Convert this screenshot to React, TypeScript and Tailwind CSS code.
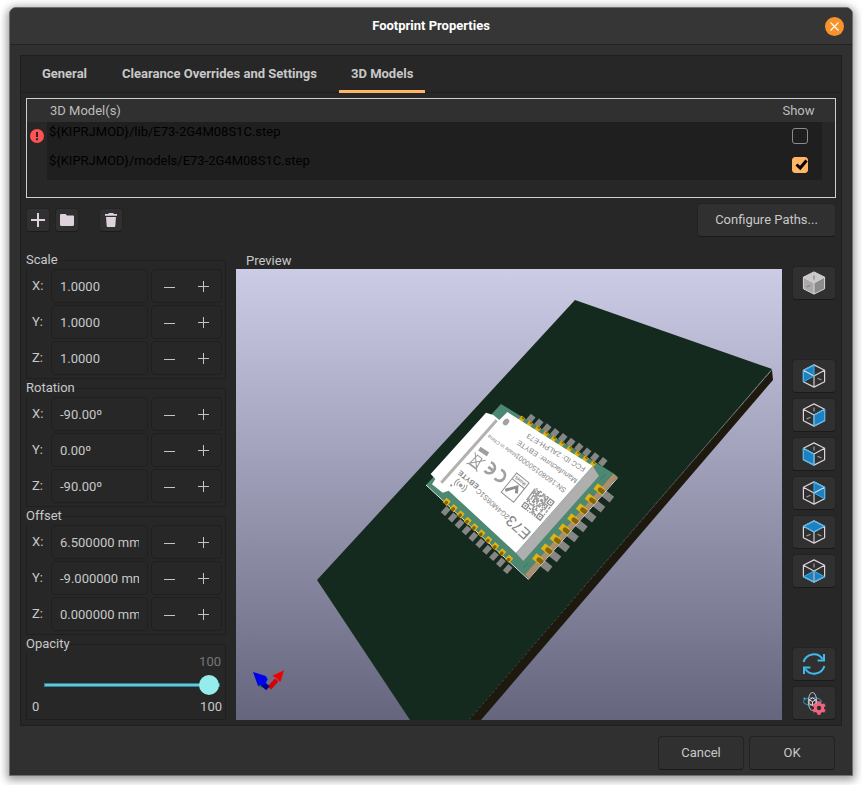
import type { ReactNode } from "react";
import { useState } from "react";

const BTN =
  "flex items-center justify-center rounded-[4px] border border-[#232323] border-b-[#1a1a1a] bg-[#303030] hover:bg-[#383838]";

const TOP = "12,0.9 22.6,6.2 12,12 1.4,6.2";
const FACES = {
  left: "12,0.9 1.4,6.2 1.4,17.8 12,12",
  right: "12,12 22.6,6.2 22.6,17.8 12,23.1",
  front: "12,12 1.4,6.2 1.4,17.8 12,23.1",
  back: "12,0.9 22.6,6.2 22.6,17.8 12,12",
  top: TOP,
  bottom: "12,12 22.6,17.8 12,23.1 1.4,17.8",
} as const;

type Face = keyof typeof FACES;
type Dash = "up" | "left" | "right";

const DASHES: Record<Dash, string> = {
  up: "M12 4.5V8.5",
  left: "M4.5 16L8.5 14.2",
  right: "M15.5 14.2L19.5 16",
};

function CubeIcon({ face, dashes }: { face: Face; dashes: Dash[] }) {
  return (
    <svg width="24" height="24" viewBox="0 0 24 24" fill="none" aria-hidden="true">
      <polygon points={FACES[face]} fill="#1a81c4" />
      {dashes.map((d) => (
        <path key={d} d={DASHES[d]} stroke="#a19ca0" strokeWidth="1.2" />
      ))}
      <path d="M12 12V23" stroke="#a8a3a8" strokeWidth="1.6" />
      <path
        d="M12 0.9L22.6 6.2V17.8L12 23.1L1.4 17.8V6.2ZM1.4 6.2L12 12L22.6 6.2"
        stroke="#ded3dd"
        strokeWidth="1.2"
        strokeLinejoin="round"
      />
      <polygon points={FACES[face]} stroke="#39b4ea" strokeWidth="1" strokeLinejoin="round" />
    </svg>
  );
}

function SolidCubeIcon() {
  return (
    <svg width="24" height="24" viewBox="0 0 24 24" fill="none" aria-hidden="true">
      <polygon points={TOP} fill="#c9c9c9" />
      <polygon points={FACES.front} fill="#aaaaaa" />
      <polygon points={FACES.right} fill="#8c8c8c" />
      <path d="M12 4.5V8.5M4.5 16L8.5 14.2" stroke="#858585" strokeWidth="1.2" />
      <path
        d="M12 0.9L22.6 6.2V17.8L12 23.1L1.4 17.8V6.2ZM1.4 6.2L12 12L22.6 6.2M12 12V23"
        stroke="#ded3dd"
        strokeWidth="1"
        strokeLinejoin="round"
      />
    </svg>
  );
}

function RefreshIcon() {
  return (
    <svg width="24" height="24" viewBox="0 0 24 24" fill="none" stroke="#42b8eb" strokeWidth="2" aria-hidden="true">
      <path d="M1.6 10A10.6 10.6 0 0 1 20.6 7M22 2V8.6H15.6" />
      <path d="M22.4 14A10.6 10.6 0 0 1 3.4 17M2 22V15.4H8.4" />
    </svg>
  );
}

function ViewerSettingsIcon() {
  return (
    <svg width="24" height="24" viewBox="0 0 24 24" fill="none" aria-hidden="true">
      <ellipse cx="10.5" cy="10.5" rx="9" ry="4" stroke="#2f86ad" strokeWidth="1.1" />
      <ellipse cx="10.5" cy="10.5" rx="4.2" ry="9" stroke="#b3abb2" strokeWidth="1.1" />
      <circle cx="2.5" cy="7.5" r="1" fill="#42b8eb" />
      <path d="M10.5 7L14 8.8V12.6L10.5 14.4L7 12.6V8.8ZM7 8.8L10.5 10.6L14 8.8M10.5 10.6V14.4" stroke="#ded3dd" strokeWidth="1" />
      <g fill="#f2647e">
        <circle cx="17" cy="17" r="5.2" />
        <path d="M15.3 10.2h3.4v13.6h-3.4z" />
        <path d="M15.3 10.2h3.4v13.6h-3.4z" transform="rotate(60 17 17)" />
        <path d="M15.3 10.2h3.4v13.6h-3.4z" transform="rotate(120 17 17)" />
      </g>
      <circle cx="17" cy="17" r="2.2" fill="#303030" />
    </svg>
  );
}

function series(count: number, x1: number, y1: number, x2: number, y2: number) {
  return Array.from({ length: count }, (_, i) => {
    const t = i / (count - 1);
    return { x: x1 + (x2 - x1) * t, y: y1 + (y2 - y1) * t };
  });
}

const QR_CELLS = Array.from({ length: 17 * 17 }, (_, i) => ({
  col: i % 17,
  row: Math.floor(i / 17),
  on: (i * 7919 + (i % 17) * (i % 13) * 31 + Math.floor(i / 17) * 57) % 11 < 6,
})).filter((c) => {
  const corner = (c.col < 5 && (c.row < 5 || c.row > 11)) || (c.col > 11 && c.row < 5);
  return c.on && !corner;
});

function ChipText({ x, y, angle, size, bold, children }: { x: number; y: number; angle: number; size: number; bold?: boolean; children: string }) {
  return (
    <text
      transform={`translate(${x} ${y}) rotate(${angle})`}
      fontSize={size}
      fontWeight={bold ? 700 : 400}
      textAnchor="middle"
      dominantBaseline="central"
      fill="#858585"
    >
      {children}
    </text>
  );
}

function Chip() {
  return (
    <g transform="translate(164 111) scale(0.33333)" className="font-['Liberation_Sans',sans-serif]">
      {series(10, 392, 116, 608, 246).map((p, i) => (
        <rect key={i} x={-11} y={-9} width={23} height={18} fill="#868686" transform={`translate(${p.x} ${p.y}) rotate(-50)`} />
      ))}
      {series(10, 138, 393, 324, 567).map((p, i) => (
        <rect key={i} x={-13} y={-9} width={25} height={17} fill="#868686" transform={`translate(${p.x} ${p.y}) rotate(-48)`} />
      ))}
      {series(8, 438, 558, 623, 349).map((p, i) => (
        <rect key={i} x={-17} y={-11} width={33} height={22} fill="#868686" transform={`translate(${p.x} ${p.y}) rotate(38)`} />
      ))}
      <polygon points="303,72 640,280 374,586 78,315" fill="#4d8873" />
      <path d="M78 315L385 598L653 293" fill="none" stroke="#e8e8e0" strokeWidth="3" />
      <polygon points="640,280 653,291 386,597 374,584" fill="#a78f6f" />
      {series(10, 366, 118, 580, 252).map((p, i) => (
        <g key={i} transform={`translate(${p.x} ${p.y}) rotate(-50)`}>
          <rect x={-10} y={-8} width={18} height={14} fill="#dcae10" />
          <rect x={2} y={-4} width={6} height={8} fill="#8b6c07" />
        </g>
      ))}
      {series(10, 140, 365, 327, 536).map((p, i) => (
        <g key={i} transform={`translate(${p.x} ${p.y}) rotate(-48)`}>
          <rect x={-9} y={-8} width={18} height={17} fill="#e0b314" />
          <ellipse cx={-3} cy={1} rx={6} ry={5} fill="#806406" />
        </g>
      ))}
      {series(8, 414, 536, 598, 326).map((p, i) => (
        <g key={i} transform={`translate(${p.x} ${p.y}) rotate(38)`}>
          <rect x={-14} y={-10} width={28} height={21} fill="#e0b314" />
          <rect x={-3} y={-6} width={22} height={14} rx={6} fill="#826607" />
        </g>
      ))}
      <polygon points="258,98 280,105 298,120 322,96 578,258 348,519 146,332 128,338 96,313 106,297 92,282" fill="#ffffff" />
      <polygon points="578,258 597,288 370,543 348,519" fill="#afafaf" />
      <path d="M290 121L124 308" stroke="#b1b1ad" strokeWidth="9" />
      <ellipse cx="318" cy="126" rx="11" ry="8" fill="#a2a2a2" transform="rotate(-45 318 126)" />
      <ChipText x={468} y={218} angle={211} size={22}>FCC ID: 2ALPH-E73</ChipText>
      <ChipText x={441} y={245} angle={214} size={22}>Manufacturer: EBYTE</ChipText>
      <ChipText x={422} y={279} angle={216} size={22}>SN:160801500001</ChipText>
      <ChipText x={306} y={198} angle={215} size={16}>Made in China</ChipText>
      <ChipText x={354} y={443} angle={222} size={46}>E73</ChipText>
      <ChipText x={278} y={372} angle={222} size={22}>2G4M08S1C</ChipText>
      <ChipText x={205} y={299} angle={219} size={22} bold>EBYTE</ChipText>
      <g transform="translate(284 275) rotate(217)" fill="none" stroke="#a0a0a0" strokeWidth="8">
        <path d="M-12 -16A17 17 0 1 0 -12 16" />
        <path d="M26 -16A17 17 0 1 0 26 16M8 0H24" />
      </g>
      <g transform="translate(228 246) rotate(217)" fill="none" stroke="#9a9a9a" strokeWidth="3">
        <path d="M-20 -22L20 22M20 -22L-20 22M-12 -15H13L9 19H-8ZM-15 -17H16" />
      </g>
      <path d="M238 206L264 223" stroke="#9d9d9d" strokeWidth="13" />
      <g transform="translate(346 322) rotate(219)" fill="none" stroke="#8f8f8f" strokeWidth="3">
        <rect x="-24" y="-38" width="48" height="74" />
        <path d="M-24 14H24" />
        <path d="M-14 -12L-3 4L18 -26" strokeWidth="9" />
      </g>
      <ChipText x={361} y={302} angle={219} size={14} bold>RoHS</ChipText>
      <g transform="translate(414 373) rotate(217)">
        <g transform="translate(-36 -36)" fill="#8c8c8c">
          {QR_CELLS.map((c) => (
            <rect key={c.row * 17 + c.col} x={c.col * 4.3} y={c.row * 4.3} width="4.3" height="4.3" />
          ))}
          <g fill="none" stroke="#8c8c8c" strokeWidth="4">
            <rect x="2" y="2" width="15" height="15" />
            <rect x="56" y="2" width="15" height="15" />
            <rect x="2" y="56" width="15" height="15" />
          </g>
          <path d="M7 7h5v5h-5zM61 7h5v5h-5zM7 61h5v5h-5z" />
        </g>
      </g>
      <g transform="translate(182 316) rotate(219)" fill="none" stroke="#9a9a9a" strokeWidth="3">
        <circle r="4" fill="#9a9a9a" />
        <path d="M-8 -8A11 11 0 0 0 -8 8M8 -8A11 11 0 0 1 8 8M-14 -13A19 19 0 0 0 -14 13M14 -13A19 19 0 0 1 14 13" />
        <circle cx="22" cy="-18" r="2" fill="#9a9a9a" />
      </g>
      <path d="M372 562L386 549M602 298L616 283" stroke="#2b5c49" strokeWidth="2" strokeDasharray="6 3" />
    </g>
  );
}

function Preview() {
  return (
    <svg viewBox="0 0 546 451" preserveAspectRatio="xMidYMid slice" className="block h-full min-h-0 w-full flex-1" role="img" aria-label="3D preview of the E73 module">
      <defs>
        <linearGradient id="sky" x1="0" y1="0" x2="0" y2="1">
          <stop offset="0" stopColor="#cccce6" />
          <stop offset="1" stopColor="#65657e" />
        </linearGradient>
      </defs>
      <rect width="546" height="451" fill="url(#sky)" />
      <polygon points="536,101 537,111 245,451 232,451" fill="#1e190f" />
      <polygon points="339,31 536,100 233,451 174,451 81,311" fill="#152a1e" />
      <path d="M536 101L233 451" stroke="#484c40" strokeWidth="1" strokeDasharray="2 3" />
      <Chip />
      <g transform="translate(-236 231) scale(0.33333)">
        <path d="M775 556L788 561" stroke="#0a7a1a" strokeWidth="4" />
        <path d="M808 564L830 540" stroke="#d80000" strokeWidth="14" />
        <polygon points="852,511 817,527 829,535 841,547" fill="#f00000" />
        <path d="M788 551L804 565" stroke="#00009c" strokeWidth="16" />
        <polygon points="759,516 797,528 803,538 796,552 774,557" fill="#0000ee" />
      </g>
    </svg>
  );
}

function AxisGroup({ title, values }: { title: string; values: string[] }) {
  return (
    <fieldset className="min-w-0 rounded-none border border-[#1f1f1f] pr-[3px] pb-[3px] pl-[5px]">
      <legend className="-ml-[6px] bg-[#272727] pb-px leading-[16px]">{title}</legend>
      <div className="flex flex-col gap-[2px]">
        {["X", "Y", "Z"].map((axis, i) => (
          <div key={axis} className="flex h-[34px] items-center">
            <label htmlFor={`${title}-${axis}`} className="w-[19px] shrink-0">
              {axis}:
            </label>
            <input
              id={`${title}-${axis}`}
              type="text"
              defaultValue={values[i]}
              className="h-full w-0 min-w-0 flex-1 rounded-[4px] border border-[#1f1f1f] bg-[#272727] px-2 outline-none focus:border-[#ffb566]"
            />
            <div className="ml-[3px] flex h-full w-[71px] shrink-0 rounded-[4px] border border-[#1f1f1f]">
              <button type="button" aria-label={`Decrease ${title} ${axis}`} className="flex flex-1 items-center justify-center">
                <svg width="11" height="11" viewBox="0 0 11 11" aria-hidden="true">
                  <path d="M0 6.5H11" stroke="#c4c4c4" />
                </svg>
              </button>
              <button type="button" aria-label={`Increase ${title} ${axis}`} className="flex flex-1 items-center justify-center">
                <svg width="11" height="11" viewBox="0 0 11 11" aria-hidden="true">
                  <path d="M0 5.5H11M5.5 0V11" stroke="#c4c4c4" />
                </svg>
              </button>
            </div>
          </div>
        ))}
      </div>
    </fieldset>
  );
}

function OpacityGroup() {
  const [value, setValue] = useState(100);
  return (
    <fieldset className="min-w-0 border border-[#1f1f1f] pr-[3px] pb-[4px] pl-[5px]">
      <legend className="-ml-[6px] bg-[#272727] pb-px leading-[16px]">
        <label htmlFor="opacity">Opacity</label>
      </legend>
      <div className="pr-px text-right leading-[18px] text-[#777777]">{value}</div>
      <div className="flex h-[28px] items-center pr-[2px] pl-[12px]">
        <input
          id="opacity"
          type="range"
          min={0}
          max={100}
          value={value}
          onChange={(e) => setValue(Number(e.target.value))}
          className="h-[20px] w-full appearance-none bg-transparent [&::-webkit-slider-runnable-track]:h-[4px] [&::-webkit-slider-runnable-track]:border [&::-webkit-slider-runnable-track]:border-[#2d8593] [&::-webkit-slider-runnable-track]:bg-[#62c9d6] [&::-webkit-slider-thumb]:-mt-[9px] [&::-webkit-slider-thumb]:size-[20px] [&::-webkit-slider-thumb]:appearance-none [&::-webkit-slider-thumb]:rounded-full [&::-webkit-slider-thumb]:bg-[#96ebeb]"
        />
      </div>
      <div className="flex justify-between leading-[16px]">
        <span>0</span>
        <span>100</span>
      </div>
    </fieldset>
  );
}

const MODELS = [
  { path: "${KIPRJMOD}/lib/E73-2G4M08S1C.step", show: false, error: true },
  { path: "${KIPRJMOD}/models/E73-2G4M08S1C.step", show: true, error: false },
];

function ModelTable() {
  return (
    <div className="mt-[5px] border border-[#cfcfcf] pb-[17px]">
      <table className="w-full table-fixed border-collapse">
        <colgroup>
          <col className="w-[20px]" />
          <col />
          <col className="w-[44px]" />
          <col className="w-[13px]" />
        </colgroup>
        <thead>
          <tr className="h-[23px] bg-[#303030] text-[#bdbdbd]">
            <td />
            <th scope="col" className="pl-[3px] text-left font-normal">3D Model(s)</th>
            <th scope="col" className="pr-[3px] text-center font-normal">Show</th>
            <td />
          </tr>
        </thead>
        <tbody>
          {MODELS.map((m) => (
            <tr key={m.path} className="h-[29px]">
              <td className="pb-[2px] align-middle">
                {m.error && (
                  <svg width="14" height="14" viewBox="0 0 14 14" className="ml-[3px] block" role="img" aria-label="Model not found">
                    <circle cx="7" cy="7" r="7" fill="#ff5353" />
                    <path d="M6 3h2v5H6zM6 9.3h2v2H6z" fill="#272727" />
                  </svg>
                )}
              </td>
              <td className="bg-[#1f1f1f] pl-[2px] align-top leading-[20px] text-black">{m.path}</td>
              <td className="bg-[#1f1f1f] pb-[2px] align-middle">
                <span className="mx-auto grid size-[16px]">
                  <input
                    type="checkbox"
                    defaultChecked={m.show}
                    aria-label={`Show ${m.path}`}
                    className="peer col-start-1 row-start-1 size-[16px] appearance-none rounded-[3px] border border-[#8c8c8c] checked:border-[#ffb566] checked:bg-[#ffb566]"
                  />
                  <svg viewBox="0 0 16 16" className="pointer-events-none col-start-1 row-start-1 hidden peer-checked:block" aria-hidden="true">
                    <path d="M4.5 7.5L8.2 11L14.5 3.5" fill="none" stroke="#000000" strokeWidth="3" />
                  </svg>
                </span>
              </td>
              <td />
            </tr>
          ))}
        </tbody>
      </table>
    </div>
  );
}

function ToolButton({ label, children }: { label: string; children: ReactNode }) {
  return (
    <button type="button" aria-label={label} className={`${BTN} size-[24px]`}>
      {children}
    </button>
  );
}

function Toolbar() {
  return (
    <div className="mt-[5px] flex h-[34px] items-center">
      <ToolButton label="Add model">
        <svg width="14" height="14" viewBox="0 0 14 14" aria-hidden="true">
          <path d="M0 7H14M7 0V14" stroke="#ded3dd" strokeWidth="2" />
        </svg>
      </ToolButton>
      <div className="w-[5px]" />
      <ToolButton label="Browse models">
        <svg width="14" height="12" viewBox="0 0 14 12" aria-hidden="true">
          <path d="M1 0H5.5L7 1.5H13A1 1 0 0 1 14 2.5V10.5A1.5 1.5 0 0 1 12.5 12H1.5A1.5 1.5 0 0 1 0 10.5V1A1 1 0 0 1 1 0Z" fill="#ded3dd" />
        </svg>
      </ToolButton>
      <div className="w-5" />
      <ToolButton label="Delete model">
        <svg width="14" height="14" viewBox="0 0 14 14" aria-hidden="true">
          <path d="M1 1H4.5V0H9.5V1H13V2.8H1ZM2 4H12L11.3 13A1 1 0 0 1 10.3 14H3.7A1 1 0 0 1 2.7 13Z" fill="#ded3dd" />
        </svg>
      </ToolButton>
      <button type="button" className={`${BTN} ml-auto h-[34px] w-[139px]`}>
        Configure Paths...
      </button>
    </div>
  );
}

const VIEWS: { label: string; face: Face; dashes: Dash[] }[] = [
  { label: "View left", face: "left", dashes: ["right"] },
  { label: "View right", face: "right", dashes: ["up", "left"] },
  { label: "View front", face: "front", dashes: ["up", "right"] },
  { label: "View back", face: "back", dashes: ["left"] },
  { label: "View top", face: "top", dashes: ["left", "right"] },
  { label: "View bottom", face: "bottom", dashes: ["up"] },
];

function ViewButton({ label, children }: { label: string; children: ReactNode }) {
  return (
    <button type="button" aria-label={label} className={`${BTN} h-[34px] w-full shrink-0`}>
      {children}
    </button>
  );
}

function ViewColumn() {
  return (
    <div className="ml-[10px] flex w-[44px] shrink-0 flex-col gap-[5px] pt-[14px]">
      <ViewButton label="Solid view">
        <SolidCubeIcon />
      </ViewButton>
      <div className="h-[49px]" />
      {VIEWS.map((v) => (
        <ViewButton key={v.label} label={v.label}>
          <CubeIcon face={v.face} dashes={v.dashes} />
        </ViewButton>
      ))}
      <div className="flex-1" />
      <ViewButton label="Reload model">
        <RefreshIcon />
      </ViewButton>
      <ViewButton label="Viewer settings">
        <ViewerSettingsIcon />
      </ViewButton>
    </div>
  );
}

const TABS = [
  { label: "General", width: "min-w-[71px]" },
  { label: "Clearance Overrides and Settings", width: "min-w-[223px]" },
  { label: "3D Models", width: "min-w-[86px]" },
];

export default function App() {
  const [tab, setTab] = useState("3D Models");
  return (
    <div className="flex min-h-screen flex-col bg-white px-[9px] pt-[7px] pb-[9px] font-['Roboto','Liberation_Sans',sans-serif] text-[13px] text-[#c8c8c8]">
      <main className="flex flex-1 flex-col overflow-hidden rounded-t-[7px] border border-[#6f6f6f] bg-[#303030] shadow-[0_2px_9px_2px_rgba(0,0,0,0.4)]">
        <header className="grid h-[37px] grid-cols-[1fr_auto_1fr] items-center border-b border-[#222222] bg-[#363636]">
          <h1 className="col-start-2 font-bold text-white">Footprint Properties</h1>
          <button type="button" aria-label="Close" className="mr-[8px] flex size-[19px] items-center justify-center justify-self-end rounded-full bg-[#f79329]">
            <svg width="9" height="9" viewBox="0 0 9 9" aria-hidden="true">
              <path d="M0.5 0.5L8.5 8.5M8.5 0.5L0.5 8.5" stroke="#ffffff" strokeWidth="1.1" />
            </svg>
          </button>
        </header>

        <div className="mx-[10px] mt-[10px] flex flex-1 flex-col border border-[#1f1f1f] bg-[#272727]">
          <div role="tablist" className="flex h-[37px] gap-2 border-b border-[#1f1f1f] pl-2">
            {TABS.map((t) => (
              <button
                key={t.label}
                type="button"
                role="tab"
                aria-selected={tab === t.label}
                onClick={() => setTab(t.label)}
                className={`h-[37px] ${t.width} border-b-[3px] px-3 pt-[2px] font-bold whitespace-nowrap ${tab === t.label ? "border-[#ffb566]" : "border-transparent"}`}
              >
                {t.label}
              </button>
            ))}
          </div>

          <div className="flex flex-1 flex-col px-[5px] pb-[5px]">
            <ModelTable />
            <Toolbar />
            <div className="mt-[15px] flex flex-1">
              <div className="flex w-[200px] shrink-0 flex-col gap-px">
                <AxisGroup title="Scale" values={["1.0000", "1.0000", "1.0000"]} />
                <AxisGroup title="Rotation" values={["-90.00º", "0.00º", "-90.00º"]} />
                <AxisGroup title="Offset" values={["6.500000 mm", "-9.000000 mm", "0.000000 mm"]} />
                <OpacityGroup />
              </div>
              <section className="ml-[10px] flex min-w-0 flex-1 flex-col">
                <h2 className="pl-[10px] leading-[17px]">Preview</h2>
                <Preview />
              </section>
              <ViewColumn />
            </div>
          </div>
        </div>

        <footer className="flex justify-end gap-[5px] pt-[10px] pr-[17px] pb-[5px]">
          <button type="button" className={`${BTN} h-[34px] w-[86px]`}>Cancel</button>
          <button type="button" className={`${BTN} h-[34px] w-[86px]`}>OK</button>
        </footer>
      </main>
    </div>
  );
}
